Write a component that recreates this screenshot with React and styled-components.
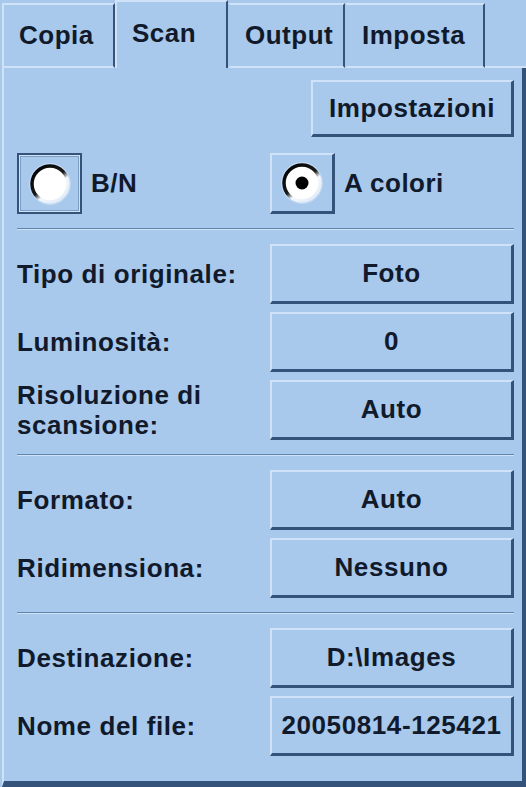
import React from 'react';
import styled, { createGlobalStyle, css } from 'styled-components';

const GlobalStyle = createGlobalStyle`
  html, body {
    margin: 0;
    padding: 0;
    background: #a8c8ec;
  }
  body {
    font-family: 'Liberation Sans', Arial, sans-serif;
    -webkit-font-smoothing: antialiased;
  }
`;

const LIGHT = '#cfe2f8';
const DARK = '#34527a';
const FACE = '#a8c8ec';
const INK = '#111a2b';

const Window = styled.div`
  width: 526px;
  height: 787px;
  display: flex;
  flex-direction: column;
  background: ${FACE};
  color: ${INK};
  padding-left: 2px;
  box-sizing: border-box;
`;

const TabRow = styled.div`
  display: flex;
  align-items: flex-end;
  height: 68px;
  flex-shrink: 0;
`;

const Tab = styled.div`
  box-sizing: border-box;
  width: ${({ w }) => w}px;
  height: ${({ active }) => (active ? 68 : 65)}px;
  padding: 0 0 0 15px;
  display: flex;
  align-items: center;
  font-size: 26px;
  font-weight: bold;
  letter-spacing: 0.5px;
  border-top: 2px solid ${LIGHT};
  border-left: 2px solid ${LIGHT};
  border-right: 2px solid ${DARK};
  ${({ active }) =>
    active
      ? css`
          border-bottom: none;
          padding-bottom: 4px;
        `
      : css`
          border-bottom: 2px solid ${LIGHT};
          border-left-color: ${({ first }) => (first ? LIGHT : 'transparent')};
        `}
`;

const TabFill = styled.div`
  flex: 1;
  align-self: flex-end;
  border-bottom: 2px solid ${LIGHT};
`;

const Panel = styled.div`
  flex: 1;
  display: flex;
  flex-direction: column;
  border-left: 2px solid ${LIGHT};
  border-right: 4px solid ${DARK};
  border-bottom: 6px solid ${DARK};
  padding: 12px 8px 0 13px;
`;

const TopBar = styled.div`
  display: flex;
  justify-content: flex-end;
  margin-bottom: 16px;
`;

const Button = styled.button`
  box-sizing: border-box;
  width: ${({ w }) => w || 244}px;
  height: ${({ h }) => h || 60}px;
  background: ${FACE};
  color: ${INK};
  font-family: 'Liberation Sans', Arial, sans-serif;
  font-size: 26px;
  font-weight: bold;
  letter-spacing: 0.6px;
  border-style: solid;
  border-width: 2px 3px 3px 2px;
  border-color: ${LIGHT} ${DARK} ${DARK} ${LIGHT};
  padding: 0;
  display: flex;
  align-items: center;
  justify-content: center;
`;

const Grid = styled.div`
  display: grid;
  grid-template-columns: 1fr 244px;
  column-gap: 14px;
  row-gap: ${({ gap }) => gap ?? 8}px;
  grid-auto-rows: ${({ rowH }) => rowH || 60}px;
`;

const Label = styled.div`
  display: flex;
  align-items: center;
  font-size: 26px;
  font-weight: bold;
  letter-spacing: 0.6px;
  line-height: 30px;
`;

const Separator = styled.div`
  margin: 14px 0;
  border-top: 1px solid #5f84ae;
  border-bottom: 1px solid ${LIGHT};
`;

const RadioOption = styled.div`
  display: flex;
  align-items: center;
  gap: 9px;
  font-size: 26px;
  font-weight: bold;
  letter-spacing: 0.5px;
`;

const RadioBox = styled.div`
  box-sizing: border-box;
  width: 65px;
  height: 61px;
  display: flex;
  align-items: center;
  justify-content: center;
  border-style: solid;
  ${({ focused }) =>
    focused
      ? css`
          border-width: 2px;
          border-color: ${DARK};
          box-shadow: inset 1px 1px 0 ${LIGHT}, inset -1px -1px 0 ${LIGHT},
            inset 2px 2px 0 #7d9fc6, inset -2px -2px 0 #7d9fc6;
        `
      : css`
          border-width: 2px 3px 3px 2px;
          border-color: ${LIGHT} ${DARK} ${DARK} ${LIGHT};
        `}
`;

const RadioIcon = ({ checked, id }) => (
  <svg width="44" height="44" viewBox="0 0 44 44">
    <defs>
      <linearGradient id={id} x1="0.1" y1="0" x2="0.9" y2="1">
        <stop offset="0%" stopColor="#000" />
        <stop offset="48%" stopColor="#1a1a1a" />
        <stop offset="62%" stopColor="#f4f8fd" />
        <stop offset="100%" stopColor="#dde9f7" />
      </linearGradient>
    </defs>
    <circle cx="22" cy="22" r="18" fill="#fff" stroke={`url(#${id})`} strokeWidth="3.5" />
    <circle cx="22" cy="22" r="20.5" fill="none" stroke="#d6e6f8" strokeWidth="1" opacity="0.6" />
    {checked && <circle cx="22" cy="22" r="6.5" fill="#000" />}
  </svg>
);

const settings = [
  { label: 'Tipo di originale:', value: 'Foto' },
  { label: 'Luminosità:', value: '0' },
  { label: <>Risoluzione di<br />scansione:</>, value: 'Auto' },
];

const format = [
  { label: 'Formato:', value: 'Auto' },
  { label: 'Ridimensiona:', value: 'Nessuno' },
];

const output = [
  { label: 'Destinazione:', value: 'D:\\Images' },
  { label: 'Nome del file:', value: '20050814-125421' },
];

const Rows = ({ items }) => (
  <Grid>
    {items.map((it, i) => (
      <React.Fragment key={i}>
        <Label>{it.label}</Label>
        <Button>{it.value}</Button>
      </React.Fragment>
    ))}
  </Grid>
);

export default function App() {
  return (
    <>
      <GlobalStyle />
      <Window>
        <TabRow>
          <Tab w={113} first>Copia</Tab>
          <Tab w={113} active>Scan</Tab>
          <Tab w={117}>Output</Tab>
          <Tab w={140}>Imposta</Tab>
          <TabFill />
        </TabRow>
        <Panel>
          <TopBar>
            <Button w={203} h={57}>Impostazioni</Button>
          </TopBar>
          <Grid rowH={61}>
            <RadioOption>
              <RadioBox focused>
                <RadioIcon id="rg1" />
              </RadioBox>
              B/N
            </RadioOption>
            <RadioOption>
              <RadioBox>
                <RadioIcon id="rg2" checked />
              </RadioBox>
              A colori
            </RadioOption>
          </Grid>
          <Separator />
          <Rows items={settings} />
          <Separator />
          <Rows items={format} />
          <Separator />
          <Rows items={output} />
        </Panel>
      </Window>
    </>
  );
}
